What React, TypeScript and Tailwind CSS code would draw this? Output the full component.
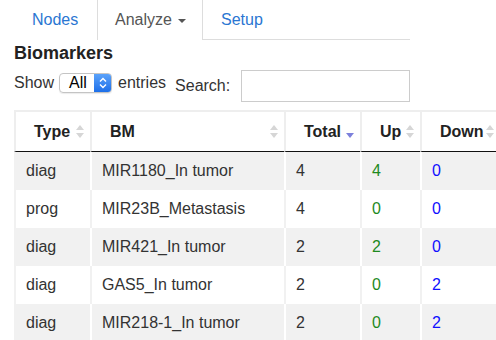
import type { ReactNode } from "react";

type Row = { type: string; bm: string; total: number; up: number; down: number };

const ROWS: Row[] = [
  { type: "diag", bm: "MIR1180_In tumor", total: 4, up: 4, down: 0 },
  { type: "prog", bm: "MIR23B_Metastasis", total: 4, up: 0, down: 0 },
  { type: "diag", bm: "MIR421_In tumor", total: 2, up: 2, down: 0 },
  { type: "diag", bm: "GAS5_In tumor", total: 2, up: 0, down: 2 },
  { type: "diag", bm: "MIR218-1_In tumor", total: 2, up: 0, down: 2 },
];

function SortBoth() {
  return (
    <svg width="8" height="13" viewBox="0 0 8 13" className="shrink-0">
      <path d="M4 0 L8 5 L0 5 Z" fill="#d6d6d6" />
      <path d="M0 8 L8 8 L4 13 Z" fill="#d6d6d6" />
    </svg>
  );
}

function SortDesc() {
  return (
    <svg width="8" height="13" viewBox="0 0 8 13" className="shrink-0">
      <path d="M0 8 L8 8 L4 13 Z" fill="#7c80dc" />
    </svg>
  );
}

function Th({ children, width, sorted }: { children: ReactNode; width: string; sorted?: boolean }) {
  return (
    <th
      className={`${width} h-[42px] border-t-2 border-l-2 border-b border-t-[#eeeeee] border-l-[#eeeeee] border-b-[#111] bg-white p-0 text-left font-bold text-[#222]`}
    >
      <div className="flex items-center justify-between pl-[18px] pr-[6px]">
        <span>{children}</span>
        {sorted ? <SortDesc /> : <SortBoth />}
      </div>
    </th>
  );
}

export default function App() {
  return (
    <div
      className="h-[340px] w-[496px] overflow-hidden bg-white text-[16px] text-[#333]"
      style={{ fontFamily: '"Liberation Sans", Arial, sans-serif' }}
    >
      <div className="pl-[14px]">
        {/* Tabs */}
        <div className="flex h-[40px] w-[396px]">
          <div className="flex w-[83px] items-center pl-[18px] text-[#2a76d2]">Nodes</div>
          <div className="flex w-[106px] items-center border-x border-[#dddddd] pl-[17px] text-[#555]">
            Analyze
            <svg width="8" height="4" viewBox="0 0 8 4" className="ml-[6px] mt-[2px]">
              <path d="M0 0 L8 0 L4 4 Z" fill="#555" />
            </svg>
          </div>
          <div className="flex flex-1 items-center border-b border-[#dddddd] pl-[18px] text-[#2a76d2]">
            Setup
          </div>
        </div>

        {/* Heading */}
        <h2 className="mt-[3px] text-[18px] font-bold leading-[20px] text-[#222]">Biomarkers</h2>

        {/* Controls */}
        <div className="mt-[7px] flex items-start">
          <div className="flex h-[25px] items-center">
            <span>Show</span>
            <div className="ml-[5px] flex h-[20px] w-[53px] overflow-hidden rounded-[4px] border border-[#c4c4c4] shadow-[0_1px_1px_rgba(0,0,0,0.08)]">
              <div className="flex flex-1 items-center pl-[9px] text-[16px] leading-none text-black">All</div>
              <div className="flex w-[17px] items-center justify-center bg-gradient-to-b from-[#5aa2fa] to-[#1c6fe9]">
                <svg width="8" height="12" viewBox="0 0 8 12">
                  <path d="M1 4.5 L4 1.5 L7 4.5" stroke="white" strokeWidth="1.4" fill="none" />
                  <path d="M1 7.5 L4 10.5 L7 7.5" stroke="white" strokeWidth="1.4" fill="none" />
                </svg>
              </div>
            </div>
            <span className="ml-[6px]">entries</span>
          </div>
          <div className="ml-[9px] flex h-[32px] items-center">
            <span>Search:</span>
            <div className="ml-[11px] h-[32px] w-[169px] border border-[#cccccc] bg-white" />
          </div>
        </div>

        {/* Table */}
        <table className="mt-[8px] w-[486px] table-fixed border-separate border-spacing-0">
          <thead>
            <tr>
              <Th width="w-[76px]">Type</Th>
              <Th width="w-[194px]">BM</Th>
              <Th width="w-[76px]" sorted>
                Total
              </Th>
              <Th width="w-[60px]">Up</Th>
              <Th width="w-[80px]">Down</Th>
            </tr>
          </thead>
          <tbody>
            {ROWS.map((r, i) => {
              const odd = i % 2 === 0;
              const cell = odd
                ? "h-[38px] border-l-2 border-white bg-[#f1f1f1] p-0 pl-[10px]"
                : "h-[38px] border-l-2 border-[#f1f1f1] bg-white p-0 pl-[10px]";
              return (
                <tr key={r.bm}>
                  <td className={`${cell} border-l-[#f1f1f1]`}>{r.type}</td>
                  <td className={cell}>{r.bm}</td>
                  <td className={cell}>{r.total}</td>
                  <td className={`${cell} text-[#1e8a1e]`}>{r.up}</td>
                  <td className={`${cell} text-[#1010ff]`}>{r.down}</td>
                </tr>
              );
            })}
          </tbody>
        </table>
      </div>
    </div>
  );
}
